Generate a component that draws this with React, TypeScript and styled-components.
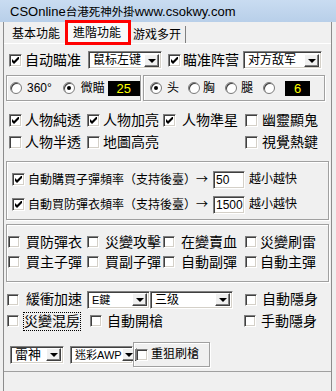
import styled, { createGlobalStyle } from 'styled-components';

const Global = createGlobalStyle`
  html, body { margin: 0; padding: 0; background: #f0f0f0; }
  body { font-family: "Liberation Sans", "Noto Sans CJK TC", sans-serif; color: #000; }
`;

const Win = styled.div`
  width: 336px;
  height: 391px;
  overflow: hidden;
  background: #f0f0f0;
  display: flex;
  flex-direction: column;
`;

const TitleBar = styled.div`
  flex: none;
  height: 22px;
  display: flex;
  align-items: center;
  padding-left: 10px;
  background: linear-gradient(#c9dcf1, #b8cfe9);
  font-size: 13px;
  white-space: nowrap;
`;

const TitleCjk = styled.span`
  font-size: 11.5px;
`;

const Frame = styled.div`
  flex: 1;
  margin: 0 4px 0 3px;
  border-left: 1px solid #8c8c8c;
  border-right: 1px solid #8c8c8c;
  display: flex;
  flex-direction: column;
`;

const TabStrip = styled.div`
  flex: none;
  height: 21px;
  display: flex;
  font-size: 12px;
  line-height: 14px;
`;

const Tab = styled.div<{ $pl: number; $pr: number; $sep?: boolean }>`
  display: flex;
  align-items: center;
  padding: 3px ${p => p.$pr}px 0 ${p => p.$pl}px;
  ${p => (p.$sep ? 'border-right: 1px solid #808080; margin: 4px 0 0; padding-top: 0;' : '')}
`;

const ActiveTab = styled.div`
  position: relative;
  width: 66px;
  box-sizing: border-box;
  padding: 0 0 0 8px;
  display: flex;
  align-items: center;
  background: #f9f9f9;

  &::after {
    content: '';
    position: absolute;
    left: 0;
    right: 0;
    top: -2px;
    bottom: -2px;
    border: 3px solid #f00;
  }
`;

const Panel = styled.div`
  flex: none;
  border-top: 1px solid #fff;
  border-bottom: 1px solid #a0a0a0;
  padding: 0 2px 4px;
  display: flex;
  flex-direction: column;
`;

const Row = styled.div<{ $h: number; $mt?: number; $pl?: number }>`
  height: ${p => p.$h}px;
  margin-top: ${p => p.$mt ?? 0}px;
  padding-left: ${p => p.$pl ?? 0}px;
  display: flex;
  align-items: center;
  flex: none;
`;

const GroupBox = styled.div<{ $w?: number; $h: number; $mt?: number; $ml?: number; $col?: boolean; $pt?: number }>`
  box-sizing: border-box;
  ${p => (p.$w ? `width: ${p.$w}px;` : '')}
  height: ${p => p.$h}px;
  margin-top: ${p => p.$mt ?? 0}px;
  margin-left: ${p => p.$ml ?? 0}px;
  border: 1px solid #a0a0a0;
  box-shadow: inset 1px 1px 0 #fff, 1px 1px 0 #fff;
  display: flex;
  flex-direction: ${p => (p.$col ? 'column' : 'row')};
  align-items: ${p => (p.$col ? 'stretch' : 'center')};
  padding-top: ${p => p.$pt ?? 0}px;
  flex: none;
`;

const Cell = styled.div<{ $w?: number; $ml?: number }>`
  flex: none;
  display: flex;
  align-items: center;
  ${p => (p.$w ? `width: ${p.$w}px;` : '')}
  margin-left: ${p => p.$ml ?? 0}px;
`;

const Box = styled.span<{ $s: number }>`
  flex: none;
  width: ${p => p.$s}px;
  height: ${p => p.$s}px;
  box-sizing: border-box;
  background: #fff;
  border: 1px solid;
  border-color: #808080 #fff #fff #808080;
  box-shadow: inset 1px 1px 0 #404040, inset -1px -1px 0 #d4d0c8;
  display: flex;
  align-items: center;
  justify-content: center;
`;

const Label = styled.span<{ $fs: number; $gap: number; $focus?: boolean }>`
  margin-left: ${p => p.$gap}px;
  font-size: ${p => p.$fs}px;
  line-height: ${p => p.$fs + 3}px;
  white-space: nowrap;
  ${p => (p.$focus ? 'outline: 1px dotted #000; outline-offset: 0;' : '')}
`;

const Arrow = styled.span`
  font-family: "Noto Sans CJK TC", sans-serif;
`;

const RadioDot = styled.span<{ $on?: boolean }>`
  flex: none;
  width: 12px;
  height: 12px;
  box-sizing: border-box;
  border-radius: 50%;
  background: #fff;
  border: 1px solid #7a7a7a;
  box-shadow: inset 1px 1px 0 #404040;
  display: flex;
  align-items: center;
  justify-content: center;

  &::after {
    content: '';
    width: 4px;
    height: 4px;
    border-radius: 50%;
    background: ${p => (p.$on ? '#000' : 'transparent')};
  }
`;

const LcdBox = styled.div<{ $w: number; $ml: number }>`
  width: ${p => p.$w}px;
  height: 15px;
  margin-left: ${p => p.$ml}px;
  background: #000;
  color: #ff0;
  font-size: 13px;
  line-height: 15px;
  text-align: center;
  flex: none;
`;

const ComboBox = styled.div<{ $w: number; $ml?: number }>`
  flex: none;
  width: ${p => p.$w}px;
  margin-left: ${p => p.$ml ?? 0}px;
  height: 18px;
  box-sizing: border-box;
  background: #fff;
  border: 1px solid;
  border-color: #808080 #fff #fff #808080;
  box-shadow: inset 1px 1px 0 #404040, inset -1px -1px 0 #d4d0c8;
  display: flex;
  align-items: center;
  padding: 0 2px 0 4px;
`;

const ComboText = styled.span<{ $fs: number }>`
  flex: 1;
  font-size: ${p => p.$fs}px;
  line-height: 14px;
  white-space: nowrap;
`;

const DropButton = styled.span`
  flex: none;
  width: 15px;
  height: 13px;
  box-sizing: border-box;
  background: #f0f0f0;
  border: 1px solid;
  border-color: #fff #404040 #404040 #fff;
  box-shadow: inset -1px -1px 0 #808080;
  display: flex;
  align-items: center;
  justify-content: center;

  &::after {
    content: '';
    border-left: 4px solid transparent;
    border-right: 4px solid transparent;
    border-top: 4px solid #000;
    margin-top: 1px;
  }
`;

const TextInput = styled.div<{ $ml: number }>`
  flex: none;
  width: 32px;
  height: 18px;
  margin-left: ${p => p.$ml}px;
  box-sizing: border-box;
  background: #fff;
  border: 1px solid;
  border-color: #808080 #fff #fff #808080;
  box-shadow: inset 1px 1px 0 #404040, inset -1px -1px 0 #d4d0c8;
  font-size: 12px;
  line-height: 16px;
  padding-left: 2px;
`;

const Hint = styled.span`
  margin-left: 4px;
  font-size: 12px;
  line-height: 15px;
`;

const PushFrame = styled.div`
  flex: none;
  width: 77px;
  height: 25px;
  box-sizing: border-box;
  border: 1px solid #a0a0a0;
  box-shadow: inset 1px 1px 0 #fff, 1px 1px 0 #fff;
  display: flex;
  align-items: center;
  padding-left: 2px;
`;

function Tick() {
  return (
    <svg width="7" height="7" viewBox="0 0 7 7">
      <path d="M0 2 L2 4 L7 -1 L7 2 L2 7 L0 5 Z" fill="#000" />
    </svg>
  );
}

type CheckProps = {
  label: React.ReactNode;
  on?: boolean;
  w?: number;
  ml?: number;
  gap?: number;
  fs?: number;
  s?: number;
  focus?: boolean;
};

function Check({ label, on, w, ml, gap = 3, fs = 14, s = 13, focus }: CheckProps) {
  return (
    <Cell $w={w} $ml={ml}>
      <Box $s={s}>{on && <Tick />}</Box>
      <Label $fs={fs} $gap={gap} $focus={focus}>{label}</Label>
    </Cell>
  );
}

function Radio({ label, on, ml, gap }: { label: string; on?: boolean; ml: number; gap: number }) {
  return (
    <Cell $ml={ml}>
      <RadioDot $on={on} />
      <Label $fs={12} $gap={gap}>{label}</Label>
    </Cell>
  );
}

function Combo({ text, w, ml, fs = 12 }: { text: string; w: number; ml?: number; fs?: number }) {
  return (
    <ComboBox $w={w} $ml={ml}>
      <ComboText $fs={fs}>{text}</ComboText>
      <DropButton />
    </ComboBox>
  );
}

export default function App() {
  return (
    <>
      <Global />
      <Win>
        <TitleBar>
          CSOnline<TitleCjk>台港死神外掛</TitleCjk> www.csokwy.com
        </TitleBar>
        <Frame>
          <TabStrip>
            <Tab $pl={8} $pr={5}>基本功能</Tab>
            <ActiveTab>進階功能</ActiveTab>
            <Tab $pl={2} $pr={4} $sep>游戏多开</Tab>
          </TabStrip>
          <Panel>
            <Row $h={18} $mt={7} $pl={3}>
              <Check label="自动瞄准" on w={79} />
              <Combo text="鼠标左键" w={74} />
              <Check label="瞄准阵营" on ml={6} w={75} gap={2} />
              <Combo text="对方敌军" w={79} />
            </Row>

            <Row $h={26} $mt={6}>
              <GroupBox $w={135} $h={26}>
                <Radio label="360°" ml={3} gap={5} />
                <Radio label="微瞄" on ml={11} gap={6} />
                <LcdBox $w={32} $ml={3}>25</LcdBox>
              </GroupBox>
              <GroupBox $w={182} $h={26} $ml={2}>
                <Radio label="头" on ml={6} gap={5} />
                <Radio label="胸" ml={9} gap={3} />
                <Radio label="腿" ml={10} gap={4} />
                <Cell $ml={10}><RadioDot /></Cell>
                <LcdBox $w={25} $ml={10}>6</LcdBox>
              </GroupBox>
            </Row>

            <Row $h={22} $mt={8} $pl={3}>
              <Check label="人物純透" on w={78} />
              <Check label="人物加亮" on w={76} />
              <Check label="人物準星" on w={82} gap={6} />
              <Check label="幽靈顯鬼" gap={4} />
            </Row>
            <Row $h={23} $pl={3}>
              <Check label="人物半透" w={78} />
              <Check label="地圖高亮" w={158} />
              <Check label="視覺熱鍵" gap={4} />
            </Row>

            <GroupBox $h={59} $mt={7} $col $pt={8}>
              <Row $h={19} $pl={5}>
                <Check label={<>自動購買子彈頻率（支持後臺）<Arrow>→</Arrow></>} on fs={12} w={201} />
                <TextInput $ml={0}>50</TextInput>
                <Hint>越小越快</Hint>
              </Row>
              <Row $h={19} $mt={6} $pl={5}>
                <Check label={<>自動買防彈衣頻率（支持後臺）<Arrow>→</Arrow></>} on fs={12} w={201} />
                <TextInput $ml={0}>1500</TextInput>
                <Hint>越小越快</Hint>
              </Row>
            </GroupBox>

            <GroupBox $h={58} $mt={4} $col $pt={7}>
              <Row $h={20} $pl={1}>
                <Check label="買防彈衣" s={12} gap={6} w={79} />
                <Check label="災變攻擊" s={12} gap={6} w={76} />
                <Check label="在變賣血" s={12} gap={6} w={82} />
                <Check label="災變刷雷" s={12} gap={3} />
              </Row>
              <Row $h={20} $pl={1}>
                <Check label="買主子彈" s={12} gap={6} w={79} />
                <Check label="買副子彈" s={12} gap={6} w={76} />
                <Check label="自動副彈" s={12} gap={6} w={82} />
                <Check label="自動主彈" s={12} gap={3} />
              </Row>
            </GroupBox>

            <Row $h={19} $mt={8} $pl={1}>
              <Check label="緩衝加速" s={12} gap={7} w={80} />
              <Combo text="E鍵" w={63} fs={11} />
              <Combo text="三级" w={83} />
              <Check label="自動隱身" s={12} gap={5} ml={12} />
            </Row>
            <Row $h={20} $mt={2} $pl={1}>
              <Check label="災變混房" s={12} gap={5} w={83} focus />
              <Check label="自動開槍" s={12} gap={5} w={154} />
              <Check label="手動隱身" s={12} gap={5} />
            </Row>
            <Row $h={25} $mt={11} $pl={4}>
              <Combo text="雷神" w={54} fs={13} />
              <Combo text="迷彩AWP" w={63} ml={6} fs={11} />
              <PushFrame>
                <Check label="重狙刷槍" s={12} gap={3} fs={12} />
              </PushFrame>
            </Row>
          </Panel>
        </Frame>
      </Win>
    </>
  );
}
